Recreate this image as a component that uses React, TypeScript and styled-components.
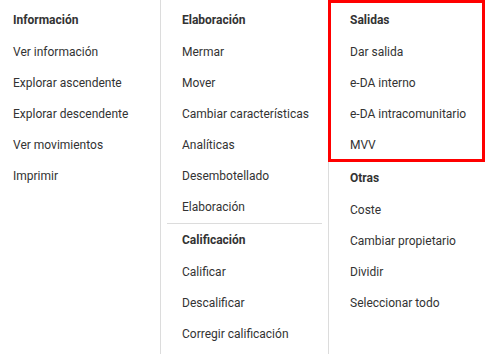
import styled, { createGlobalStyle } from 'styled-components';

interface IGroup {
  title: string;
  items: string[];
}

const columns: { indent: number; groups: IGroup[]; highlightFirst?: boolean }[] = [
  {
    indent: 7,
    groups: [
      {
        title: 'Información',
        items: ['Ver información', 'Explorar ascendente', 'Explorar descendente', 'Ver movimientos', 'Imprimir'],
      },
    ],
  },
  {
    indent: 15,
    groups: [
      {
        title: 'Elaboración',
        items: ['Mermar', 'Mover', 'Cambiar características', 'Analíticas', 'Desembotellado', 'Elaboración'],
      },
      {
        title: 'Calificación',
        items: ['Calificar', 'Descalificar', 'Corregir calificación'],
      },
    ],
  },
  {
    indent: 15,
    highlightFirst: true,
    groups: [
      {
        title: 'Salidas',
        items: ['Dar salida', 'e-DA interno', 'e-DA intracomunitario', 'MVV'],
      },
      {
        title: 'Otras',
        items: ['Coste', 'Cambiar propietario', 'Dividir', 'Seleccionar todo'],
      },
    ],
  },
];

function App() {
  return (
    <>
      <GlobalStyle />
      <Menu>
        {columns.map((col, ci) => (
          <Column key={ci} $first={ci === 0}>
            {col.groups.map((group, gi) => (
              <Group
                key={gi}
                $indent={col.indent}
                $divided={gi < col.groups.length - 1}
                $highlight={!!col.highlightFirst && gi === 0}
              >
                <GroupTitle>{group.title}</GroupTitle>
                {group.items.map((item) => (
                  <MenuItem key={item}>{item}</MenuItem>
                ))}
              </Group>
            ))}
          </Column>
        ))}
      </Menu>
    </>
  );
}

export default App;

const GlobalStyle = createGlobalStyle`
  html, body, #root {
    margin: 0;
    height: 100%;
  }
  body {
    background: #fff;
    font-family: Roboto, "Liberation Sans", Arial, sans-serif;
    font-size: 12px;
    color: #333;
  }
`;

const Menu = styled.div`
  display: grid;
  grid-template-columns: 160px 168px 1fr;
  height: 100vh;
  overflow: hidden;
`;

const Column = styled.div<{ $first?: boolean }>`
  padding: 0 6px;
  border-left: ${(p) => (p.$first ? 'none' : '1px solid #dcdcdc')};
`;

const Group = styled.section<{ $indent: number; $divided?: boolean; $highlight?: boolean }>`
  padding: 1px 0 0 ${(p) => p.$indent}px;
  border-bottom: ${(p) => (p.$divided ? '1px solid #dcdcdc' : 'none')};

  &:first-child {
    padding-top: 5px;
  }

  ${(p) =>
    p.$highlight &&
    `
    margin: 0 -6px 0 -7px;
    padding-left: ${p.$indent + 7}px;
    outline: 3px solid #ff0000;
    outline-offset: -3px;
  `}
`;

const GroupTitle = styled.div`
  font-weight: 700;
  line-height: 30px;
  margin-bottom: 2px;
  color: #333;
`;

const MenuItem = styled.div`
  line-height: 31px;
  white-space: nowrap;
  cursor: pointer;

  &:hover {
    color: #000;
  }
`;
